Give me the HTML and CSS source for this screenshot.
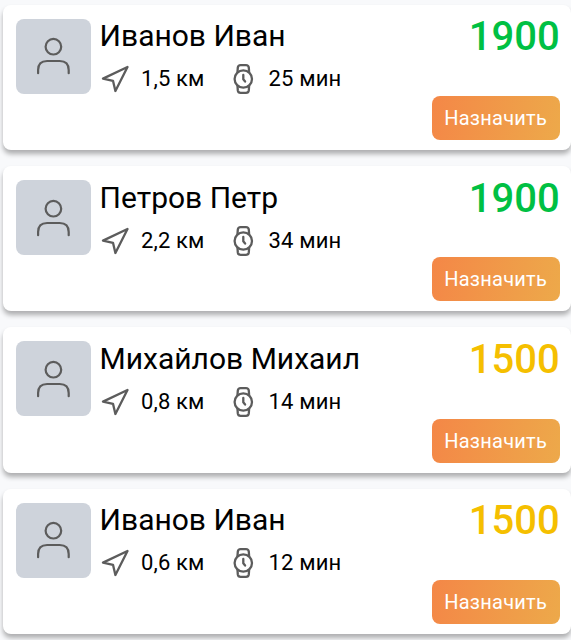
FILE: index.html
```html
<!DOCTYPE html>
<html lang="ru">
<head>
<meta charset="utf-8">
<title>Исполнители</title>
<link rel="stylesheet" href="styles.css">
</head>
<body>
<svg width="0" height="0" class="sprite" aria-hidden="true">
  <symbol id="user" viewBox="0 0 36 40"><circle cx="18.400" cy="9.700" r="7.800"/><path d="M3.100 36.200v-3.200q0-9 9-9h12.600q9 0 9 9v3.200"/></symbol>
  <symbol id="arrow" viewBox="0 0 28 28"><path d="M26.500 2 2 13.600l10 2.200 2.400 10.200z"/></symbol>
  <symbol id="watch" viewBox="0 0 22 32"><circle cx="11.300" cy="16" r="8.700"/><path d="M5.500 8.800 5.800 4.600q.3-2.500 2.800-2.500h5.400q2.500 0 2.800 2.500L17.100 8.800M5.500 23.200l.3 4.200q.3 2.500 2.800 2.500h5.400q2.500 0 2.800-2.500l.3-4.200M11.300 11.900v4.400l1.800 2.200"/></symbol>
</svg>
<main class="list">
  <article class="card">
    <div class="avatar"><svg class="user"><use href="#user"/></svg></div>
    <div class="info">
      <h2 class="name">Иванов Иван</h2>
      <div class="meta"><svg class="arrow"><use href="#arrow"/></svg><span class="distance">1,5 км</span><svg class="watch"><use href="#watch"/></svg><span>25 мин</span></div>
    </div>
    <div class="side"><div class="price good">1900</div><button class="assign">Назначить</button></div>
  </article>
  <article class="card">
    <div class="avatar"><svg class="user"><use href="#user"/></svg></div>
    <div class="info">
      <h2 class="name">Петров Петр</h2>
      <div class="meta"><svg class="arrow"><use href="#arrow"/></svg><span class="distance">2,2 км</span><svg class="watch"><use href="#watch"/></svg><span>34 мин</span></div>
    </div>
    <div class="side"><div class="price good">1900</div><button class="assign">Назначить</button></div>
  </article>
  <article class="card">
    <div class="avatar"><svg class="user"><use href="#user"/></svg></div>
    <div class="info">
      <h2 class="name">Михайлов Михаил</h2>
      <div class="meta"><svg class="arrow"><use href="#arrow"/></svg><span class="distance">0,8 км</span><svg class="watch"><use href="#watch"/></svg><span>14 мин</span></div>
    </div>
    <div class="side"><div class="price fair">1500</div><button class="assign">Назначить</button></div>
  </article>
  <article class="card">
    <div class="avatar"><svg class="user"><use href="#user"/></svg></div>
    <div class="info">
      <h2 class="name">Иванов Иван</h2>
      <div class="meta"><svg class="arrow"><use href="#arrow"/></svg><span class="distance">0,6 км</span><svg class="watch"><use href="#watch"/></svg><span>12 мин</span></div>
    </div>
    <div class="side"><div class="price fair">1500</div><button class="assign">Назначить</button></div>
  </article>
</main>
</body>
</html>
```
FILE: styles.css
```css
* { box-sizing: border-box; }
body {
  margin: 0;
  height: 640px;
  overflow: hidden;
  background: #f8f9fb;
  color: #000;
  font-family: Roboto, sans-serif;
}
.sprite { display: block; }
.list {
  display: flex;
  flex-direction: column;
  gap: 16px;
  padding: 5.1px 0 0 3.4px;
}
.card {
  display: flex;
  height: 145.2px;
  padding: 14px 11.4px 10px 12.6px;
  background: #fff;
  border-radius: 8px;
  box-shadow: 0 4px 5px rgba(0, 0, 0, .3);
}
svg { flex: none; fill: none; stroke: #5c5c5c; stroke-width: 2.3; stroke-linejoin: round; stroke-linecap: round; }
.avatar {
  flex: none;
  width: 75px;
  height: 75px;
  padding: 18.3px 0 0 19.4px;
  background: #ced3db;
  border-radius: 8px;
}
.user { display: block; width: 36px; height: 40px; stroke-width: 2.2; }
.info { flex: 1; padding-left: 8.6px; }
.name {
  margin: -.7px 0 0;
  font-size: 30px;
  font-weight: 400;
  line-height: 36px;
  white-space: nowrap;
}
.meta {
  display: flex;
  align-items: center;
  height: 32px;
  margin-top: 9px;
  font-size: 22px;
  line-height: 32px;
  letter-spacing: .15px;
  white-space: nowrap;
}
.arrow { width: 28px; height: 28px; margin: 0 12.4px 0 1px; }
.distance { width: 91.2px; }
.watch { width: 22px; height: 32px; margin-right: 14.4px; }
.side { display: flex; flex-direction: column; align-items: flex-end; justify-content: space-between; }
.price { margin-top: -4.7px; font-size: 40px; font-weight: 500; line-height: 46px; }
.good { color: #00c043; }
.fair { color: #f5bf00; }
.assign {
  width: 128px;
  height: 44px;
  padding: 0;
  border: 0;
  border-radius: 8px;
  background: linear-gradient(100deg, #f48747, #eda94a);
  color: #fff;
  font: 400 20px/44px Roboto, sans-serif;
  letter-spacing: .25px;
}
```
